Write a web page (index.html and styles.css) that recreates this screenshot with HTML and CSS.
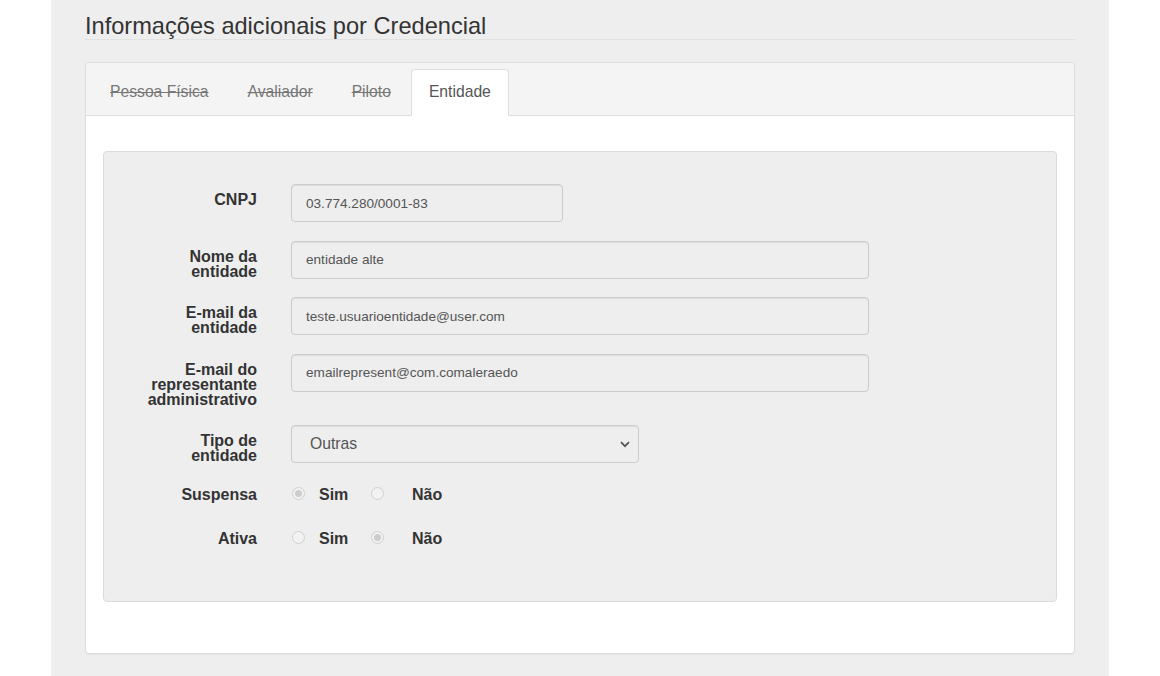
FILE: index.html
```html
<!DOCTYPE html>
<html lang="pt">
<head>
<meta charset="utf-8">
<title>Informações adicionais por Credencial</title>
<link rel="stylesheet" href="styles.css">
</head>
<body>
<div class="page">
  <h2 class="title">Informações adicionais por Credencial</h2>
  <div class="panel">
    <ul class="tabs">
      <li class="tab disabled">Pessoa Física</li>
      <li class="tab disabled">Avaliador</li>
      <li class="tab disabled">Piloto</li>
      <li class="tab active">Entidade</li>
    </ul>
    <div class="panel-body">
      <div class="well">
        <div class="row">
          <label class="lbl">CNPJ</label>
          <div class="field"><input class="input w-sm" type="text" value="03.774.280/0001-83" disabled></div>
        </div>
        <div class="row">
          <label class="lbl">Nome da entidade</label>
          <div class="field"><input class="input w-lg" type="text" value="entidade alte" disabled></div>
        </div>
        <div class="row">
          <label class="lbl">E-mail da entidade</label>
          <div class="field"><input class="input w-lg" type="text" value="teste.usuarioentidade@user.com" disabled></div>
        </div>
        <div class="row">
          <label class="lbl">E-mail do representante administrativo</label>
          <div class="field"><input class="input w-lg" type="text" value="emailrepresent@com.comaleraedo" disabled></div>
        </div>
        <div class="row select-row">
          <label class="lbl">Tipo de entidade</label>
          <div class="field">
            <div class="select">
              <span>Outras</span>
              <svg class="chev" width="10" height="7" viewBox="0 0 10 7"><path d="M1 1.2 L5 5.2 L9 1.2" fill="none" stroke="#555" stroke-width="1.7"/></svg>
            </div>
          </div>
        </div>
        <div class="row radio-row">
          <label class="lbl">Suspensa</label>
          <div class="radios">
            <span class="radio checked"></span><span class="opt opt-sim">Sim</span>
            <span class="radio"></span><span class="opt opt-nao">Não</span>
          </div>
        </div>
        <div class="row radio-row">
          <label class="lbl">Ativa</label>
          <div class="radios">
            <span class="radio"></span><span class="opt opt-sim">Sim</span>
            <span class="radio checked"></span><span class="opt opt-nao">Não</span>
          </div>
        </div>
      </div>
    </div>
  </div>
</div>
</body>
</html>
```
FILE: styles.css
```css
html, body {
  margin: 0;
  padding: 0;
  background: #fff;
  font-family: "Liberation Sans", Arial, sans-serif;
  color: #333;
}
.page {
  width: 1058px;
  margin: 0 auto;
  min-height: 676px;
  background: #eeeeee;
  padding: 13px 34px 20px;
  box-sizing: border-box;
}
.title {
  margin: 0;
  font-size: 23.6px;
  font-weight: normal;
  line-height: 26px;
  color: #333;
  border-bottom: 1px solid #e2e2e2;
}
.panel {
  margin-top: 22px;
  background: #fff;
  border: 1px solid #ddd;
  border-radius: 4px;
  box-shadow: 0 1px 1px rgba(0,0,0,0.05);
}
.tabs {
  list-style: none;
  margin: 0;
  padding: 6px 0 0 5px;
  display: flex;
  background: #f4f4f4;
  border-bottom: 1px solid #ddd;
  border-radius: 4px 4px 0 0;
}
.tab {
  padding: 0 18px;
  height: 47px;
  line-height: 44px;
  font-size: 15.7px;
  margin-right: 1px;
  margin-bottom: -1px;
  border: 1px solid transparent;
  border-radius: 4px 4px 0 0;
  box-sizing: border-box;
}
.tab.disabled {
  color: #777;
  text-decoration: line-through;
}
.tab.active {
  background: #fff;
  border-color: #ddd;
  border-bottom-color: #fff;
  color: #555;
  padding: 0 17px;
}
.panel-body {
  padding: 35px 17px 51px;
}
.well {
  background: #eeeeee;
  border: 1px solid #dcdcdc;
  border-radius: 4px;
  padding: 32px 0 28px;
}
.row {
  display: grid;
  grid-template-columns: 153px 1fr;
  column-gap: 34px;
  margin-bottom: 18.5px;
}
.lbl {
  justify-self: end;
  width: 112px;
  text-align: right;
  font-weight: bold;
  font-size: 16px;
  line-height: 15px;
  padding-top: 8px;
  color: #333;
}
.input {
  display: block;
  height: 38px;
  box-sizing: border-box;
  border: 1px solid #ccc;
  border-radius: 4px;
  background: #eeeeee;
  padding: 0 14px;
  font-family: "Liberation Sans", Arial, sans-serif;
  font-size: 13.6px;
  color: #555;
  box-shadow: inset 0 1px 1px rgba(0,0,0,0.075);
  opacity: 1;
  -webkit-text-fill-color: #555;
}
.w-sm { width: 272px; }
.w-lg { width: 578px; }
.select {
  width: 348px;
  height: 38px;
  box-sizing: border-box;
  border: 1px solid #ccc;
  border-radius: 4px;
  background: #eeeeee;
  padding: 0 8px 0 18px;
  display: flex;
  align-items: center;
  justify-content: space-between;
  font-size: 15.7px;
  color: #555;
  box-shadow: inset 0 1px 1px rgba(0,0,0,0.075);
}
.chev { margin-top: 1px; }
.select-row { margin-bottom: 22px; }
.radio-row { margin-bottom: 25px; }
.radio-row .lbl { padding-top: 1px; line-height: 18px; width: auto; }
.radios {
  display: flex;
  align-items: center;
  height: 18px;
  padding-top: 1px;
}
.radio {
  width: 13px;
  height: 13px;
  box-sizing: border-box;
  border: 1px solid #cfcfcf;
  border-radius: 50%;
  background: #f2f2f2;
  position: relative;
  margin-left: 1px;
  margin-top: -4px;
}
.radio.checked::after {
  content: "";
  position: absolute;
  left: 2px;
  top: 2px;
  width: 7px;
  height: 7px;
  border-radius: 50%;
  background: #cccccc;
}
.opt {
  font-weight: bold;
  font-size: 16px;
}
.opt-sim {
  margin-left: 14px;
  width: 28px;
  margin-right: 23px;
}
.opt-nao {
  margin-left: 28px;
}
```
